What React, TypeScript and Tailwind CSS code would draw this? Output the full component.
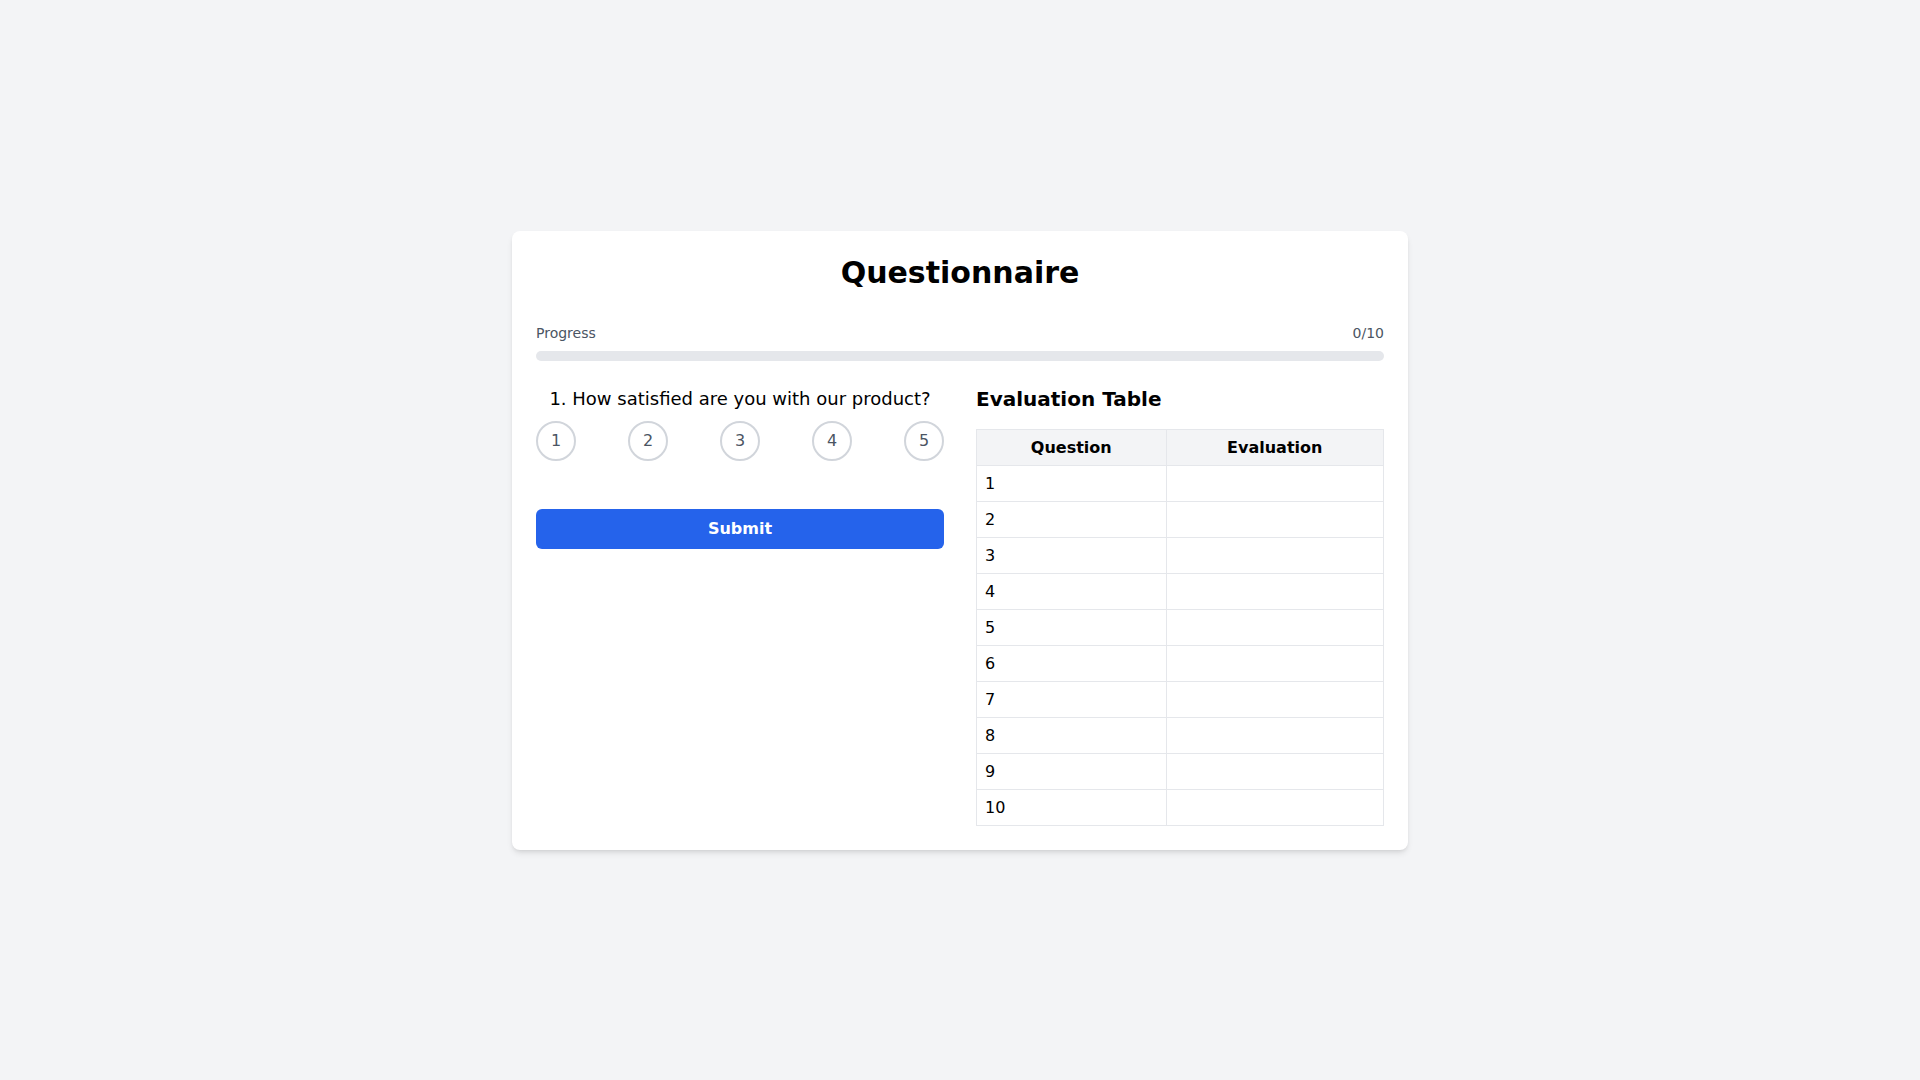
import { useState } from "react";

const questions = [
  "How satisfied are you with our product?",
  "How likely are you to recommend us to a friend?",
  "How easy was it to use our product?",
  "How would you rate our customer support?",
  "How well does the product meet your needs?",
  "How would you rate the value for money?",
  "How satisfied are you with the delivery time?",
  "How would you rate the product quality?",
  "How likely are you to buy from us again?",
  "How satisfied are you overall?",
];

const App = () => {
  const [current, setCurrent] = useState(0);
  const [answers, setAnswers] = useState<(number | null)[]>(Array(10).fill(null));
  const [selected, setSelected] = useState<number | null>(null);

  const done = answers.filter((a) => a !== null).length;

  const handleSubmit = () => {
    if (selected === null) return;
    const next = [...answers];
    next[current] = selected;
    setAnswers(next);
    setSelected(null);
    if (current < questions.length - 1) setCurrent(current + 1);
  };

  return (
    <div className="min-h-screen bg-[#f3f4f6] flex items-center justify-center font-['DejaVu_Sans',sans-serif]">
      <div className="w-[896px] bg-white rounded-lg shadow-md p-6">
        <h1 className="text-3xl font-bold text-center text-black mb-8">Questionnaire</h1>

        <div className="mb-6">
          <div className="flex justify-between text-sm text-[#4b5563] mb-2">
            <span>Progress</span>
            <span>{done}/10</span>
          </div>
          <div className="w-full h-2.5 bg-[#e5e7eb] rounded-full overflow-hidden">
            <div className="h-full bg-[#2563eb] rounded-full" style={{ width: `${done * 10}%` }} />
          </div>
        </div>

        <div className="grid grid-cols-2 gap-8">
          <div>
            <p className="text-lg text-black text-center mb-2">
              {current + 1}. {questions[current]}
            </p>
            <div className="flex justify-between">
              {[1, 2, 3, 4, 5].map((n) => (
                <button
                  key={n}
                  onClick={() => setSelected(n)}
                  className={
                    selected === n
                      ? "w-10 h-10 rounded-full border-2 border-[#2563eb] bg-[#2563eb] text-white flex items-center justify-center"
                      : "w-10 h-10 rounded-full border-2 border-[#d1d5db] text-[#4b5563] flex items-center justify-center"
                  }
                >
                  {n}
                </button>
              ))}
            </div>
            <button
              onClick={handleSubmit}
              className="mt-12 w-full h-10 bg-[#2563eb] text-white font-bold rounded-md"
            >
              Submit
            </button>
          </div>

          <div>
            <h2 className="text-xl font-bold text-black mb-4">Evaluation Table</h2>
            <table className="w-full border-collapse text-black">
              <thead>
                <tr className="bg-[#f3f4f6]">
                  <th className="border border-[#e5e7eb] px-2 py-2 leading-[19px] font-bold">Question</th>
                  <th className="border border-[#e5e7eb] px-2 py-2 leading-[19px] font-bold">Evaluation</th>
                </tr>
              </thead>
              <tbody>
                {answers.map((a, i) => (
                  <tr key={i}>
                    <td className="border border-[#e5e7eb] px-2 py-2 leading-[19px]">{i + 1}</td>
                    <td className="border border-[#e5e7eb] px-2 py-2 leading-[19px]">{a ?? ""}</td>
                  </tr>
                ))}
              </tbody>
            </table>
          </div>
        </div>
      </div>
    </div>
  );
};

export default App;
